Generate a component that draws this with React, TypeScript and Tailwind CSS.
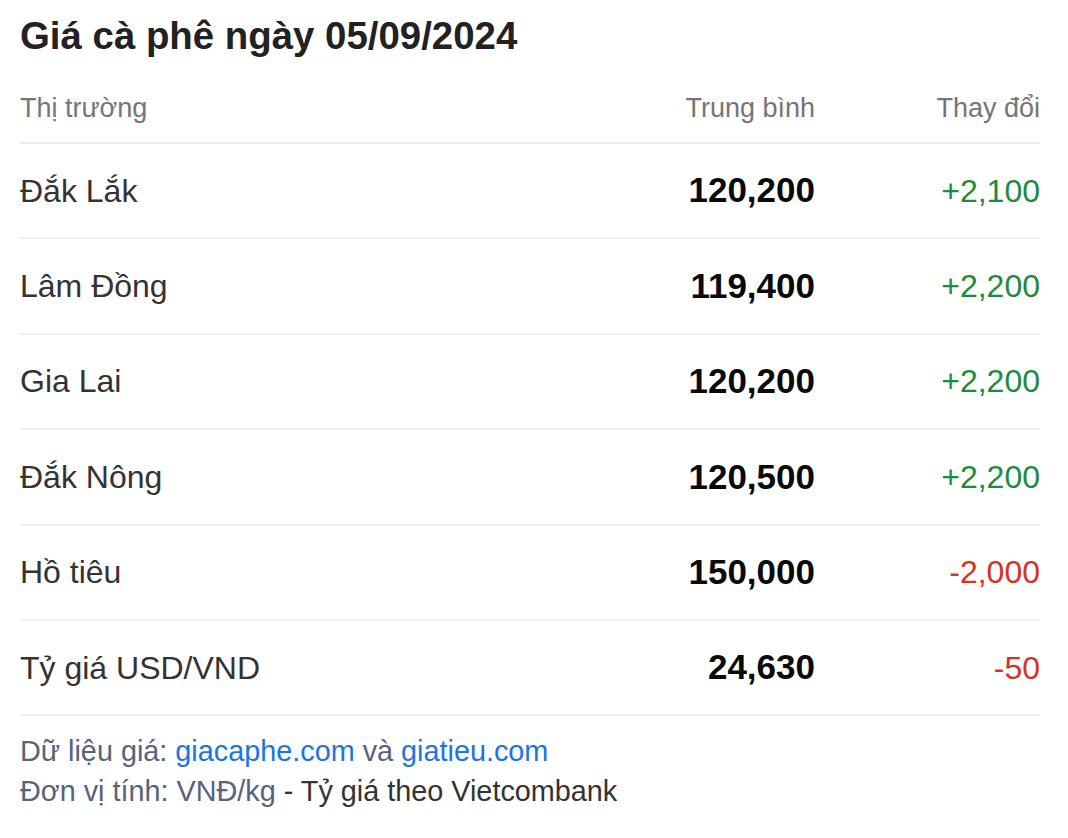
const rows = [
  { name: "Đắk Lắk", price: "120,200", change: "+2,100", up: true },
  { name: "Lâm Đồng", price: "119,400", change: "+2,200", up: true },
  { name: "Gia Lai", price: "120,200", change: "+2,200", up: true },
  { name: "Đắk Nông", price: "120,500", change: "+2,200", up: true },
  { name: "Hồ tiêu", price: "150,000", change: "-2,000", up: false },
  { name: "Tỷ giá USD/VND", price: "24,630", change: "-50", up: false },
];

export default function App() {
  return (
    <div className="min-h-screen bg-white px-5 font-['Liberation_Sans',Arial,sans-serif]">
      <h1 className="pt-[14px] text-[38.4px] font-bold leading-[44px] text-[#222222]">
        Giá cà phê ngày 05/09/2024
      </h1>

      <div className="mt-[34px] w-[1020px]">
        <div className="grid h-[52px] grid-cols-[1fr_240px_225px] items-start border-b-2 border-[#eaebed] text-[27px] leading-[32px] text-[#757575]">
          <div>Thị trường</div>
          <div className="text-right">Trung bình</div>
          <div className="text-right">Thay đổi</div>
        </div>

        {rows.map((row) => (
          <div
            key={row.name}
            className="grid h-[95.4px] grid-cols-[1fr_240px_225px] items-center border-b-2 border-[#eef0f2]"
          >
            <div className="text-[32px] text-[#333333]">{row.name}</div>
            <div className="text-right text-[35px] font-bold text-[#0a0a0a]">{row.price}</div>
            <div
              className={`text-right text-[32px] ${row.up ? "text-[#1e8a3e]" : "text-[#d93025]"}`}
            >
              {row.change}
            </div>
          </div>
        ))}

        <div className="pt-[15px] text-[28.8px] leading-[40px] text-[#56637a]">
          <div>
            Dữ liệu giá: <span className="text-[#1a73e8]">giacaphe.com</span> và{" "}
            <span className="text-[#1a73e8]">giatieu.com</span>
          </div>
          <div>
            Đơn vị tính: VNĐ/kg <span className="text-[#333333]">- Tỷ giá theo Vietcombank</span>
          </div>
        </div>
      </div>
    </div>
  );
}
